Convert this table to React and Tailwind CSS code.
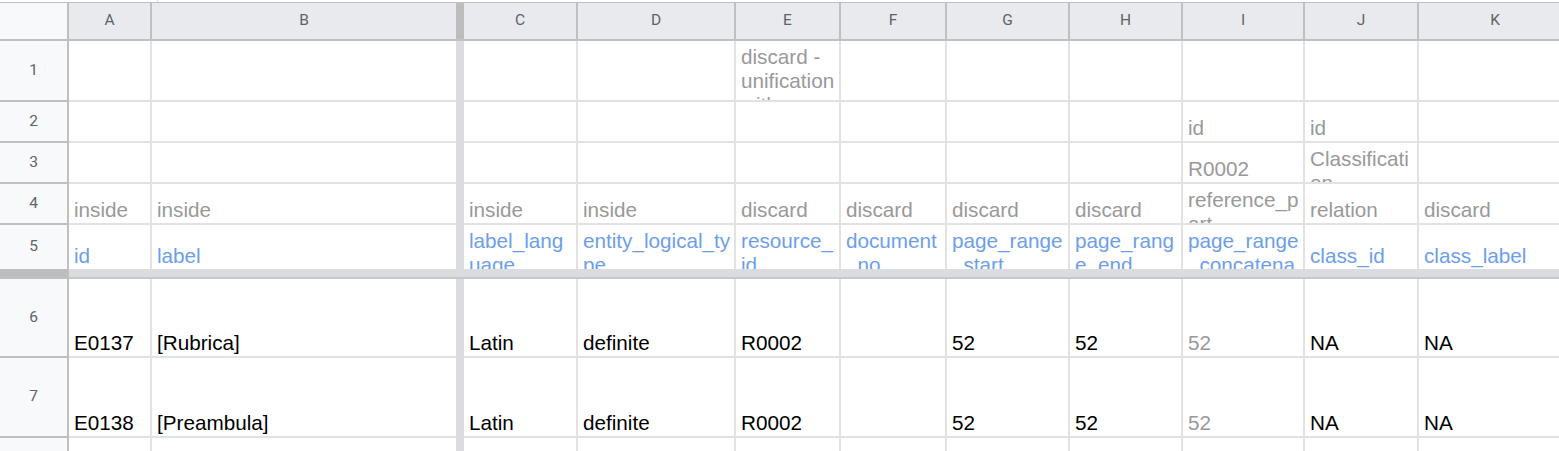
import React from "react";

const COLS = [
  { k: "A", w: "w-[83px]" },
  { k: "B", w: "w-[304px]", nb: true },
  { k: "FZ" },
  { k: "C", w: "w-[114px]" },
  { k: "D", w: "w-[158px]" },
  { k: "E", w: "w-[105px]" },
  { k: "F", w: "w-[106px]" },
  { k: "G", w: "w-[123px]" },
  { k: "H", w: "w-[113px]" },
  { k: "I", w: "w-[122px]" },
  { k: "J", w: "w-[114px]" },
  { k: "K", w: "w-[154px]" },
];

const GRAY = "text-[#999999]";
const BLUE = "text-[#6d9eeb]";
const BLACK = "text-black";

const ROWS = [
  {
    n: "1",
    h: "h-[61px]",
    cells: { E: { lines: ["discard -", "unification", "with"], c: GRAY, top: true } },
  },
  {
    n: "2",
    h: "h-[41px]",
    cells: { I: { lines: ["id"], c: GRAY }, J: { lines: ["id"], c: GRAY } },
  },
  {
    n: "3",
    h: "h-[41px]",
    cells: {
      I: { lines: ["R0002"], c: GRAY },
      J: { lines: ["Classificati", "on"], c: GRAY, top: true },
    },
  },
  {
    n: "4",
    h: "h-[41px]",
    cells: {
      A: { lines: ["inside"], c: GRAY },
      B: { lines: ["inside"], c: GRAY },
      C: { lines: ["inside"], c: GRAY },
      D: { lines: ["inside"], c: GRAY },
      E: { lines: ["discard"], c: GRAY },
      F: { lines: ["discard"], c: GRAY },
      G: { lines: ["discard"], c: GRAY },
      H: { lines: ["discard"], c: GRAY },
      I: { lines: ["reference_p", "art"], c: GRAY, top: true },
      J: { lines: ["relation"], c: GRAY },
      K: { lines: ["discard"], c: GRAY },
    },
  },
  {
    n: "5",
    h: "h-[44px]",
    nb: true,
    cells: {
      A: { lines: ["id"], c: BLUE },
      B: { lines: ["label"], c: BLUE },
      C: { lines: ["label_lang", "uage"], c: BLUE, top: true },
      D: { lines: ["entity_logical_ty", "pe"], c: BLUE, top: true },
      E: { lines: ["resource_", "id"], c: BLUE, top: true },
      F: { lines: ["document", "_no"], c: BLUE, top: true },
      G: { lines: ["page_range", "_start"], c: BLUE, top: true },
      H: { lines: ["page_rang", "e_end"], c: BLUE, top: true },
      I: { lines: ["page_range", "_concatena"], c: BLUE, top: true },
      J: { lines: ["class_id"], c: BLUE },
      K: { lines: ["class_label"], c: BLUE },
    },
  },
  { freeze: true },
  {
    n: "6",
    h: "h-[79px]",
    cells: {
      A: { lines: ["E0137"], c: BLACK },
      B: { lines: ["[Rubrica]"], c: BLACK },
      C: { lines: ["Latin"], c: BLACK },
      D: { lines: ["definite"], c: BLACK },
      E: { lines: ["R0002"], c: BLACK },
      G: { lines: ["52"], c: BLACK },
      H: { lines: ["52"], c: BLACK },
      I: { lines: ["52"], c: GRAY },
      J: { lines: ["NA"], c: BLACK },
      K: { lines: ["NA"], c: BLACK },
    },
  },
  {
    n: "7",
    h: "h-[80px]",
    cells: {
      A: { lines: ["E0138"], c: BLACK },
      B: { lines: ["[Preambula]"], c: BLACK },
      C: { lines: ["Latin"], c: BLACK },
      D: { lines: ["definite"], c: BLACK },
      E: { lines: ["R0002"], c: BLACK },
      G: { lines: ["52"], c: BLACK },
      H: { lines: ["52"], c: BLACK },
      I: { lines: ["52"], c: GRAY },
      J: { lines: ["NA"], c: BLACK },
      K: { lines: ["NA"], c: BLACK },
    },
  },
  { n: "", h: "h-[13px]", nb: true, cells: {} },
];

function HeaderRow() {
  return (
    <div className="flex h-[38px] shrink-0">
      <div className="w-[69px] shrink-0 bg-[#f8f9fa] border-r-2 border-b-2 border-[#c0c0c0]" />
      {COLS.map((c) =>
        c.k === "FZ" ? (
          <div key={c.k} className="w-[8px] shrink-0 bg-[#bdbdbd] border-b-2 border-[#c0c0c0]" />
        ) : (
          <div
            key={c.k}
            className={
              "shrink-0 flex items-center justify-center bg-[#e8eaed] border-b-2 border-[#c0c0c0] text-[15.5px] text-[#5f6368] font-['Roboto',Arial,sans-serif] " +
              c.w +
              (c.nb ? "" : " border-r-2")
            }
          >
            {c.k}
          </div>
        )
      )}
    </div>
  );
}

function Cell({ col, data, noBottom }) {
  const base =
    "shrink-0 overflow-hidden pl-[5px] pr-[3px] flex flex-col border-[#e2e2e3] " +
    col.w +
    (col.nb ? "" : " border-r-2") +
    (noBottom ? "" : " border-b-2");
  if (!data) return <div className={base} />;
  return (
    <div
      className={
        base + (data.top ? " justify-start pt-[4px]" : " justify-end pb-[1px]") + " " + data.c
      }
    >
      {data.lines.map((l, i) => (
        <div key={i} className="whitespace-pre leading-[24px] shrink-0">
          {l}
        </div>
      ))}
    </div>
  );
}

function BodyRow({ row }) {
  return (
    <div className={"flex shrink-0 " + row.h}>
      <div
        className={
          "w-[69px] shrink-0 bg-[#f8f9fa] border-r-2 border-[#c0c0c0] flex items-center justify-center text-[15.5px] text-[#5f6368] font-['Roboto',Arial,sans-serif]" +
          (row.nb ? "" : " border-b-2")
        }
      >
        {row.n}
      </div>
      {COLS.map((c) =>
        c.k === "FZ" ? (
          <div key={c.k} className="w-[8px] shrink-0 bg-[#dadce0]" />
        ) : (
          <Cell key={c.k} col={c} data={row.cells[c.k]} noBottom={row.nb} />
        )
      )}
    </div>
  );
}

function FreezeRow() {
  return (
    <div className="flex h-[10px] shrink-0">
      <div className="w-[69px] shrink-0 bg-[#bdbdbd] border-r-2 border-b-2 border-[#c0c0c0]" />
      <div className="w-[1504px] shrink-0 bg-[#dadce0] border-b-2 border-[#c6c8cc]" />
    </div>
  );
}

export default function App() {
  return (
    <div className="w-[1559px] h-[451px] overflow-hidden bg-white font-['Liberation_Sans',Arial,sans-serif] text-[20.7px] flex flex-col">
      <div className="flex h-[3px] shrink-0 border-b border-[#c0c0c0]">
        <div className="w-[158px] shrink-0 border-r border-[#dadce0]" />
      </div>
      <HeaderRow />
      {ROWS.map((r, i) => (r.freeze ? <FreezeRow key={i} /> : <BodyRow key={i} row={r} />))}
    </div>
  );
}
